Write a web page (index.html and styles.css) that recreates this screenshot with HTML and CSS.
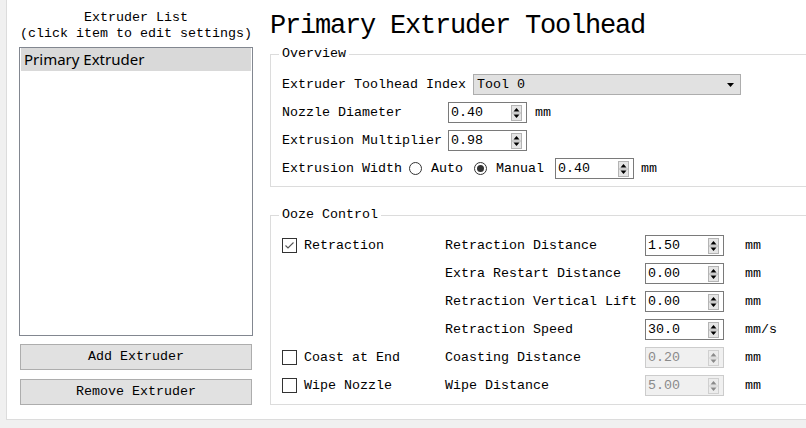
FILE: index.html
```html
<!DOCTYPE html>
<html>
<head>
<meta charset="utf-8">
<link rel="stylesheet" href="styles.css">
</head>
<body>
<div class="window">
  <div class="left">
    <div class="left-head">
      <span>Extruder List</span>
      <span>(click item to edit settings)</span>
    </div>
    <div class="list">
      <div class="list-item">Primary Extruder</div>
    </div>
    <div class="btn">Add Extruder</div>
    <div class="btn btn-second">Remove Extruder</div>
  </div>

  <div class="right">
    <div class="title">Primary Extruder Toolhead</div>

    <div class="group">
      <span class="group-title">Overview</span>
      <div class="rows">
        <div class="row">
          <span>Extruder Toolhead Index</span>
          <div class="combo">
            <span>Tool 0</span>
            <svg class="combo-arrow" width="7" height="4" viewBox="0 0 7 4"><path d="M0 0H7L3.5 4Z" fill="#000"/></svg>
          </div>
        </div>
        <div class="row">
          <span class="label-w">Nozzle Diameter</span>
          <div class="spin"><span class="spin-val">0.40</span>
            <svg class="spin-btn" width="11" height="16" viewBox="0 0 11 16"><rect x="0.5" y="0.5" width="10" height="15" fill="#e5e5e5" stroke="#b4b4b4"/><line x1="1" y1="8" x2="10" y2="8" stroke="#b4b4b4"/><path d="M5.5 3L8.5 6.5H2.5Z" fill="#000"/><path d="M2.5 9.5H8.5L5.5 13Z" fill="#000"/></svg>
          </div>
          <span class="unit">mm</span>
        </div>
        <div class="row">
          <span class="label-w">Extrusion Multiplier</span>
          <div class="spin"><span class="spin-val">0.98</span>
            <svg class="spin-btn" width="11" height="16" viewBox="0 0 11 16"><rect x="0.5" y="0.5" width="10" height="15" fill="#e5e5e5" stroke="#b4b4b4"/><line x1="1" y1="8" x2="10" y2="8" stroke="#b4b4b4"/><path d="M5.5 3L8.5 6.5H2.5Z" fill="#000"/><path d="M2.5 9.5H8.5L5.5 13Z" fill="#000"/></svg>
          </div>
        </div>
        <div class="row">
          <span>Extrusion Width</span>
          <span class="radio radio-auto"></span>
          <span class="radio-label">Auto</span>
          <span class="radio radio-on radio-manual"></span>
          <span class="radio-label">Manual</span>
          <div class="spin spin-width"><span class="spin-val">0.40</span>
            <svg class="spin-btn" width="11" height="16" viewBox="0 0 11 16"><rect x="0.5" y="0.5" width="10" height="15" fill="#e5e5e5" stroke="#b4b4b4"/><line x1="1" y1="8" x2="10" y2="8" stroke="#b4b4b4"/><path d="M5.5 3L8.5 6.5H2.5Z" fill="#000"/><path d="M2.5 9.5H8.5L5.5 13Z" fill="#000"/></svg>
          </div>
          <span class="unit unit-narrow">mm</span>
        </div>
      </div>
    </div>

    <div class="group group-ooze">
      <span class="group-title">Ooze Control</span>
      <div class="ooze-grid">
        <div class="check-cell">
          <span class="check"><svg width="13" height="13" viewBox="0 0 13 13"><path d="M2.5 6.5L5 9L10.5 3.5" fill="none" stroke="#555" stroke-width="1.1"/></svg></span>
          <span>Retraction</span>
        </div>
        <span>Retraction Distance</span>
        <div class="spin"><span class="spin-val">1.50</span>
          <svg class="spin-btn" width="11" height="16" viewBox="0 0 11 16"><rect x="0.5" y="0.5" width="10" height="15" fill="#e5e5e5" stroke="#b4b4b4"/><line x1="1" y1="8" x2="10" y2="8" stroke="#b4b4b4"/><path d="M5.5 3L8.5 6.5H2.5Z" fill="#000"/><path d="M2.5 9.5H8.5L5.5 13Z" fill="#000"/></svg>
        </div>
        <span class="unit-o">mm</span>

        <span></span>
        <span>Extra Restart Distance</span>
        <div class="spin"><span class="spin-val">0.00</span>
          <svg class="spin-btn" width="11" height="16" viewBox="0 0 11 16"><rect x="0.5" y="0.5" width="10" height="15" fill="#e5e5e5" stroke="#b4b4b4"/><line x1="1" y1="8" x2="10" y2="8" stroke="#b4b4b4"/><path d="M5.5 3L8.5 6.5H2.5Z" fill="#000"/><path d="M2.5 9.5H8.5L5.5 13Z" fill="#000"/></svg>
        </div>
        <span class="unit-o">mm</span>

        <span></span>
        <span>Retraction Vertical Lift</span>
        <div class="spin"><span class="spin-val">0.00</span>
          <svg class="spin-btn" width="11" height="16" viewBox="0 0 11 16"><rect x="0.5" y="0.5" width="10" height="15" fill="#e5e5e5" stroke="#b4b4b4"/><line x1="1" y1="8" x2="10" y2="8" stroke="#b4b4b4"/><path d="M5.5 3L8.5 6.5H2.5Z" fill="#000"/><path d="M2.5 9.5H8.5L5.5 13Z" fill="#000"/></svg>
        </div>
        <span class="unit-o">mm</span>

        <span></span>
        <span>Retraction Speed</span>
        <div class="spin"><span class="spin-val">30.0</span>
          <svg class="spin-btn" width="11" height="16" viewBox="0 0 11 16"><rect x="0.5" y="0.5" width="10" height="15" fill="#e5e5e5" stroke="#b4b4b4"/><line x1="1" y1="8" x2="10" y2="8" stroke="#b4b4b4"/><path d="M5.5 3L8.5 6.5H2.5Z" fill="#000"/><path d="M2.5 9.5H8.5L5.5 13Z" fill="#000"/></svg>
        </div>
        <span class="unit-o">mm/s</span>

        <div class="check-cell">
          <span class="check"></span>
          <span>Coast at End</span>
        </div>
        <span>Coasting Distance</span>
        <div class="spin spin-off"><span class="spin-val">0.20</span>
          <svg class="spin-btn" width="11" height="16" viewBox="0 0 11 16"><rect x="0.5" y="0.5" width="10" height="15" fill="#ececec" stroke="#d0d0d0"/><line x1="1" y1="8" x2="10" y2="8" stroke="#d0d0d0"/><path d="M5.5 3L8.5 6.5H2.5Z" fill="#8a8a8a"/><path d="M2.5 9.5H8.5L5.5 13Z" fill="#8a8a8a"/></svg>
        </div>
        <span class="unit-o">mm</span>

        <div class="check-cell">
          <span class="check"></span>
          <span>Wipe Nozzle</span>
        </div>
        <span>Wipe Distance</span>
        <div class="spin spin-off"><span class="spin-val">5.00</span>
          <svg class="spin-btn" width="11" height="16" viewBox="0 0 11 16"><rect x="0.5" y="0.5" width="10" height="15" fill="#ececec" stroke="#d0d0d0"/><line x1="1" y1="8" x2="10" y2="8" stroke="#d0d0d0"/><path d="M5.5 3L8.5 6.5H2.5Z" fill="#8a8a8a"/><path d="M2.5 9.5H8.5L5.5 13Z" fill="#8a8a8a"/></svg>
        </div>
        <span class="unit-o">mm</span>
      </div>
    </div>
  </div>
</div>
</body>
</html>
```

FILE: styles.css
```css
html, body {
  margin: 0;
  padding: 0;
}

body {
  background: #f0f0f0;
  overflow: hidden;
  font-family: "Liberation Mono", "DejaVu Sans Mono", monospace;
  font-size: 13.33px;
  color: #000;
}

.window {
  margin-left: 6px;
  height: 419px;
  width: 900px;
  border-left: 1px solid #dcdcdc;
  border-bottom: 1px solid #dcdcdc;
  background: #fff;
  display: flex;
  padding-left: 12px;
  gap: 17px;
}

.left {
  width: 234px;
  flex-shrink: 0;
  display: flex;
  flex-direction: column;
}

.left-head {
  padding-top: 10px;
  line-height: 16px;
  display: flex;
  flex-direction: column;
  align-items: center;
  white-space: nowrap;
}

.list {
  margin-top: 5px;
  height: 287px;
  border: 1px solid #828790;
  padding: 0 1px;
}

.list-item {
  height: 23px;
  line-height: 23px;
  padding-left: 3px;
  background: #d9d9d9;
  font-family: "Noto Sans", "Open Sans", sans-serif;
  font-size: 15px;
}

.btn {
  margin-top: 8px;
  margin-left: 1px;
  width: 230px;
  height: 24px;
  line-height: 24px;
  border: 1px solid #adadad;
  background: #e1e1e1;
  text-align: center;
  white-space: nowrap;
}

.btn-second {
  margin-top: 9px;
}

.right {
  width: 600px;
  flex-shrink: 0;
}

.title {
  margin-top: 11px;
  font-size: 27px;
  letter-spacing: -1.2px;
  line-height: 30px;
  white-space: nowrap;
}

.group {
  margin-top: 13px;
  border: 1px solid #dcdcdc;
  position: relative;
  padding: 19px 0 7px 11px;
}

.group-ooze {
  margin-top: 28px;
  padding: 19px 0 8px 11px;
}

.group-title {
  position: absolute;
  top: -9px;
  left: 8px;
  padding: 0 3px;
  background: #fff;
  line-height: 16px;
}

.rows {
  display: flex;
  flex-direction: column;
  gap: 7px;
}

.row {
  display: flex;
  align-items: center;
  height: 21px;
  white-space: nowrap;
}

.label-w {
  width: 166px;
}

.combo {
  margin-left: 7px;
  width: 263px;
  height: 19px;
  border: 1px solid #adadad;
  background: #e1e1e1;
  display: flex;
  align-items: center;
  padding-left: 3px;
  box-sizing: content-box;
}

.combo-arrow {
  margin-left: auto;
  margin-right: 6px;
}

.spin {
  width: 77px;
  height: 19px;
  border: 1px solid #7a7a7a;
  background: #fff;
  display: flex;
  align-items: center;
}

.spin-val {
  padding-left: 2px;
}

.spin-btn {
  margin-left: auto;
  margin-right: 4px;
  display: block;
}

.spin-off {
  border-color: #cccccc;
  background: #f0f0f0;
  color: #8a8a8a;
}

.unit {
  margin-left: 8px;
}

.unit-narrow {
  margin-left: 7px;
}

.radio {
  width: 11px;
  height: 11px;
  border: 1px solid #333;
  border-radius: 50%;
  background: #fff;
  display: flex;
  align-items: center;
  justify-content: center;
  flex-shrink: 0;
}

.radio-auto {
  margin-left: 7px;
}

.radio-manual {
  margin-left: 11px;
}

.radio-on::after {
  content: "";
  width: 7px;
  height: 7px;
  border-radius: 50%;
  background: #333;
}

.radio-label {
  margin-left: 9px;
}

.spin-width {
  margin-left: 11px;
}

.ooze-grid {
  display: grid;
  grid-template-columns: 163px 200px 79px auto;
  grid-auto-rows: 21px;
  row-gap: 7px;
  align-items: center;
  white-space: nowrap;
}

.check-cell {
  display: flex;
  align-items: center;
}

.check {
  width: 13px;
  height: 13px;
  border: 1px solid #333;
  background: #fff;
  margin-right: 7px;
  display: flex;
}

.unit-o {
  margin-left: 21px;
}
```
